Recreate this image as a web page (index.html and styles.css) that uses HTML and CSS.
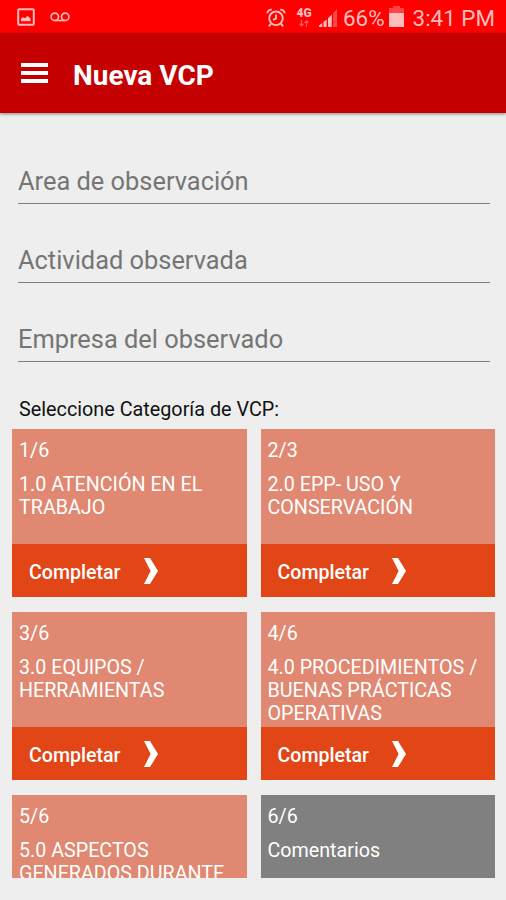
FILE: index.html
```html
<!DOCTYPE html>
<html lang="es">
<head>
  <meta charset="UTF-8" />
  <meta name="viewport" content="width=device-width, initial-scale=1.0" />
  <title>Nueva VCP</title>
  <link rel="stylesheet" href="styles.css">
</head>
<body>
  <div class="status-bar">
    <svg class="icon-image" width="18" height="18" viewBox="0 0 18 18">
      <rect x="1.2" y="1.2" width="15.6" height="15.6" rx="1" fill="none" stroke="currentColor" stroke-width="2"/>
      <path d="M4 13.2V10.5L6.3 9.3L8 10.3L10.5 7.8L13.5 10.5V13.2Z" fill="currentColor"/>
    </svg>
    <svg class="icon-voicemail" width="20" height="10" viewBox="0 0 20 10">
      <circle cx="4.8" cy="4.8" r="3.7" fill="none" stroke="currentColor" stroke-width="1.6"/>
      <circle cx="15.2" cy="4.8" r="3.7" fill="none" stroke="currentColor" stroke-width="1.6"/>
      <path d="M4.8 8.5H15.2" stroke="currentColor" stroke-width="1.6"/>
    </svg>
    <div class="status-right">
      <svg class="icon-alarm" width="20" height="20" viewBox="0 0 20 20" fill="none" stroke="currentColor" stroke-width="1.9">
        <circle cx="10" cy="10.3" r="6.8"/>
        <path d="M10 6.4V10.6L7 11.8M1.2 5.2C1.8 2.8 3.4 1.5 5.8 1.6M18.8 5.2C18.2 2.8 16.6 1.5 14.2 1.6M5.2 15.3L3 18.4M14.8 15.3L17 18.4"/>
      </svg>
      <div class="network">
        <span>4G</span>
        <svg width="10" height="7" viewBox="0 0 10 7" fill="none" stroke="currentColor" stroke-width="1.3">
          <path d="M2.5 0V5.5M0.6 3.8L2.5 5.8L4.4 3.8M7.5 7V1.2M5.6 3L7.5 1L9.4 3"/>
        </svg>
      </div>
      <svg class="icon-signal" width="18" height="18" viewBox="0 0 18 18" fill="currentColor">
        <path d="M0 18V16.5L3.2 14V18Z"/>
        <path d="M4.5 18V13L7.7 10.5V18Z"/>
        <path d="M9 18V9.2L12.8 5.5V18Z"/>
        <path d="M14.2 18V4L18 0V18Z" opacity="0.4"/>
      </svg>
      <span class="percent">66%</span>
      <svg class="icon-battery" width="15" height="21" viewBox="0 0 15 21" fill="currentColor">
        <path d="M0 7V2H4V0H11V2H15V7Z" opacity="0.35"/>
        <rect y="7" width="15" height="14"/>
      </svg>
      <span class="clock">3:41 PM</span>
    </div>
  </div>

  <header class="toolbar">
    <div class="menu-btn">
      <div></div>
      <div></div>
      <div></div>
    </div>
    <h1>Nueva VCP</h1>
  </header>

  <main class="content">
    <input class="field" type="text" placeholder="Area de observación">
    <input class="field" type="text" placeholder="Actividad observada">
    <input class="field" type="text" placeholder="Empresa del observado">
    <p class="label">Seleccione Categoría de VCP:</p>

    <div class="grid">
      <div class="card">
        <div class="card-body">
          <div class="count">1/6</div>
          <div class="name">1.0 ATENCIÓN EN EL TRABAJO</div>
        </div>
        <div class="card-action">
          <span>Completar</span>
          <svg class="chevron" width="15" height="26" viewBox="0 0 15 26"><path d="M0 0H6L14 13L6 26H0L6.6 13Z"/></svg>
        </div>
      </div>
      <div class="card">
        <div class="card-body">
          <div class="count">2/3</div>
          <div class="name">2.0 EPP- USO Y CONSERVACIÓN</div>
        </div>
        <div class="card-action">
          <span>Completar</span>
          <svg class="chevron" width="15" height="26" viewBox="0 0 15 26"><path d="M0 0H6L14 13L6 26H0L6.6 13Z"/></svg>
        </div>
      </div>
      <div class="card">
        <div class="card-body">
          <div class="count">3/6</div>
          <div class="name">3.0 EQUIPOS / HERRAMIENTAS</div>
        </div>
        <div class="card-action">
          <span>Completar</span>
          <svg class="chevron" width="15" height="26" viewBox="0 0 15 26"><path d="M0 0H6L14 13L6 26H0L6.6 13Z"/></svg>
        </div>
      </div>
      <div class="card">
        <div class="card-body">
          <div class="count">4/6</div>
          <div class="name">4.0 PROCEDIMIENTOS / BUENAS PRÁCTICAS OPERATIVAS</div>
        </div>
        <div class="card-action">
          <span>Completar</span>
          <svg class="chevron" width="15" height="26" viewBox="0 0 15 26"><path d="M0 0H6L14 13L6 26H0L6.6 13Z"/></svg>
        </div>
      </div>
      <div class="card">
        <div class="card-body">
          <div class="count">5/6</div>
          <div class="name">5.0 ASPECTOS GENERADOS DURANTE</div>
        </div>
      </div>
      <div class="card comments">
        <div class="card-body">
          <div class="count">6/6</div>
          <div class="name">Comentarios</div>
        </div>
      </div>
    </div>
  </main>
</body>
</html>
```

FILE: styles.css
```css
* {
  box-sizing: border-box;
  margin: 0;
  padding: 0;
}
body {
  display: flex;
  flex-direction: column;
  height: 900px;
  overflow: hidden;
  font-family: Roboto, sans-serif;
  background-color: #eeeeee;
}
svg {
  display: block;
  flex: none;
}
.status-bar {
  display: flex;
  align-items: flex-start;
  flex: none;
  height: 33px;
  padding: 8px 11px 0 17px;
  background-color: #ff0000;
  color: #ffbcbc;
}
.icon-voicemail {
  margin: 4px 0 0 15px;
}
.status-right {
  display: flex;
  align-items: flex-start;
  margin-left: auto;
}
.network {
  display: flex;
  flex-direction: column;
  align-items: center;
  width: 16px;
  margin-left: 10px;
  font-size: 12px;
  font-weight: 900;
  line-height: 11px;
}
.network svg {
  margin-top: 1px;
  opacity: 0.5;
}
.icon-alarm {
  margin-left: 1px;
}
.icon-signal {
  margin: 1px 0 0 7px;
}
.percent,
.clock {
  font-size: 22.4px;
  line-height: 21px;
  white-space: nowrap;
}
.percent {
  margin-left: 6px;
}
.icon-battery {
  margin: -2px 0 0 4px;
}
.clock {
  margin-left: 9px;
}
.toolbar {
  display: flex;
  align-items: center;
  flex: none;
  height: 80px;
  padding: 0 21px;
  background-color: #c40000;
  box-shadow: 0 1px 3px rgba(0, 0, 0, 0.45);
  color: #fff;
}
.menu-btn {
  display: flex;
  flex-direction: column;
  gap: 4px;
  width: 27px;
}
.menu-btn div {
  height: 4px;
  background-color: #fff;
}
.toolbar h1 {
  margin: 5px 0 0 25px;
  font-size: 28px;
  font-weight: 700;
}
.content {
  display: flex;
  flex-direction: column;
  height: 765px;
  padding: 40px 11px 0 12px;
  overflow: hidden;
}
.field {
  flex: none;
  height: 51px;
  margin: 0 5px 28px 6px;
  padding-top: 6px;
  border: 0;
  border-bottom: 1px solid #7d7d7d;
  outline: 0;
  background: none;
  font-family: inherit;
  font-size: 25.4px;
}
.field::placeholder {
  color: #757575;
}
.label {
  flex: none;
  margin: 8px 0 7px 7px;
  font-size: 19.8px;
  line-height: 24px;
  color: #111;
}
.grid {
  display: grid;
  grid-template-columns: 1fr 1fr;
  gap: 15px 14px;
}
.card {
  height: 168px;
  background-color: #e08871;
  color: #fff;
}
.card-body {
  height: 115px;
  padding: 10px 7px 0;
  overflow: hidden;
  font-size: 19.7px;
  line-height: 23px;
}
.name {
  margin-top: 11px;
}
.card-action {
  display: flex;
  align-items: center;
  height: 53px;
  padding-left: 17px;
  background-color: #e24617;
  font-size: 19.6px;
  font-weight: 500;
}
.card-action span {
  margin-top: 3px;
}
.chevron {
  margin-left: 23px;
  fill: #fff;
}
.comments {
  background-color: #808080;
}
```
